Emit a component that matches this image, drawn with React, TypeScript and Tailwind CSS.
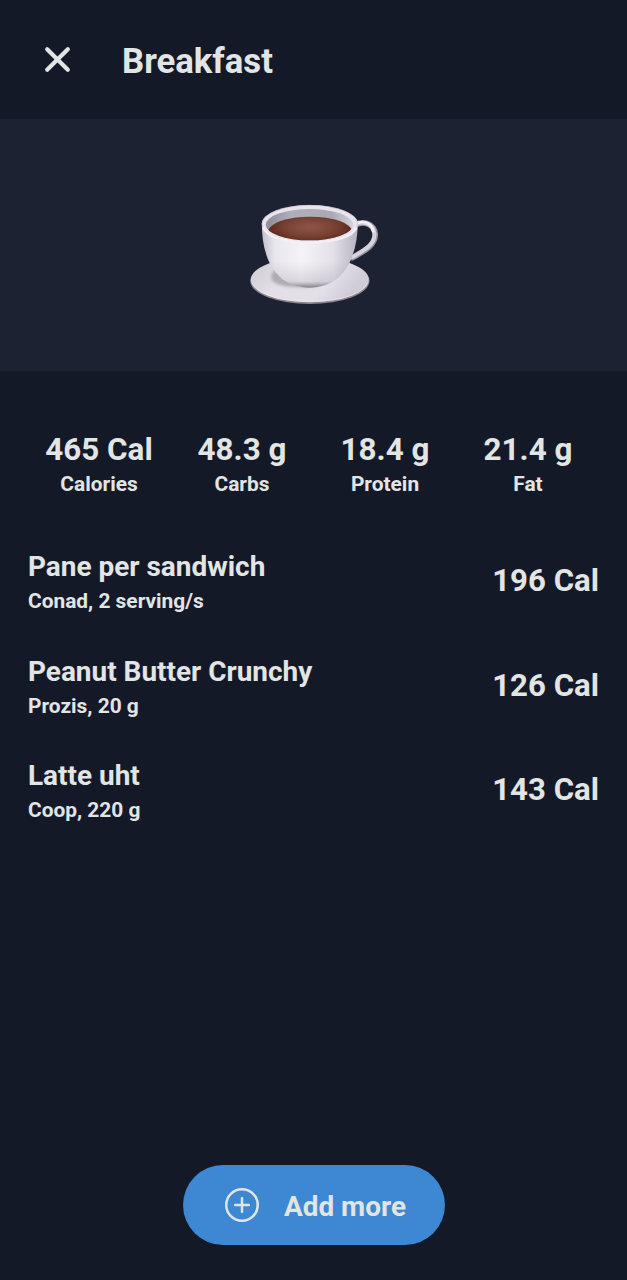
import React from "react"

type Nutrient = {
  label: string
  value: string
}

type Food = {
  name: string
  details: string
  calories: string
}

const nutrients: Nutrient[] = [
  { label: "Calories", value: "465 Cal" },
  { label: "Carbs", value: "48.3 g" },
  { label: "Protein", value: "18.4 g" },
  { label: "Fat", value: "21.4 g" },
]

const foods: Food[] = [
  { name: "Pane per sandwich", details: "Conad, 2 serving/s", calories: "196 Cal" },
  { name: "Peanut Butter Crunchy", details: "Prozis, 20 g", calories: "126 Cal" },
  { name: "Latte uht", details: "Coop, 220 g", calories: "143 Cal" },
]

const CoffeeCup: React.FC = () => (
  <svg viewBox="-2.5 -30 480 390" className="h-[130px] w-[160px]" role="img" aria-label="Cup of coffee">
    <defs>
      <linearGradient id="bowl" x1="0" y1="0" x2="1" y2="0">
        <stop offset="0" stopColor="#c3c0cc" />
        <stop offset="0.14" stopColor="#e9e7ee" />
        <stop offset="0.42" stopColor="#f5f3f7" />
        <stop offset="0.75" stopColor="#e2dfe8" />
        <stop offset="1" stopColor="#b5b1bf" />
      </linearGradient>
      <linearGradient id="bowlShade" x1="0" y1="0" x2="0" y2="1">
        <stop offset="0.6" stopColor="#8f8795" stopOpacity="0" />
        <stop offset="0.9" stopColor="#8f8795" stopOpacity="0.25" />
        <stop offset="1" stopColor="#6f6973" stopOpacity="0.85" />
      </linearGradient>
      <linearGradient id="inside" x1="0" y1="0" x2="1" y2="0">
        <stop offset="0" stopColor="#8d8b98" />
        <stop offset="0.3" stopColor="#b0b0bb" />
        <stop offset="0.75" stopColor="#a9a8b5" />
        <stop offset="1" stopColor="#d3d1da" />
      </linearGradient>
      <radialGradient id="coffee" cx="0.5" cy="0.35" r="0.55">
        <stop offset="0" stopColor="#8f5548" />
        <stop offset="0.55" stopColor="#784134" />
        <stop offset="1" stopColor="#592516" />
      </radialGradient>
      <linearGradient id="saucer" x1="0" y1="0" x2="1" y2="0.3">
        <stop offset="0" stopColor="#cbc8d1" />
        <stop offset="0.35" stopColor="#e2dfe6" />
        <stop offset="0.75" stopColor="#e4e0e8" />
        <stop offset="1" stopColor="#d0ccd6" />
      </linearGradient>
      <filter id="soft" x="-20%" y="-20%" width="140%" height="140%">
        <feGaussianBlur stdDeviation="4" />
      </filter>
      <clipPath id="rimClip">
        <ellipse cx="224" cy="104" rx="131" ry="47" />
      </clipPath>
    </defs>

    {/* saucer */}
    <ellipse cx="225" cy="273" rx="179" ry="69" fill="#8a8793" />
    <ellipse cx="225" cy="269" rx="177" ry="68" fill="url(#saucer)" />
    <path d="M53 279C65 311 130 334 225 334S385 311 397 279" fill="none" stroke="#f0edf3" strokeWidth="3" opacity="0.5" />
    <path
      d="M109 262C109 237 142 222 225 222C300 222 326 244 290 267C264 286 222 295 181 291C142 290 109 281 109 262Z"
      fill="#a09aa6"
      opacity="0.75"
      filter="url(#soft)"
    />

    {/* handle */}
    <path d="M363 104C385 92 418 100 421 132C423 166 386 184 353 203" fill="none" stroke="#9794a1" strokeWidth="17" strokeLinecap="round" />
    <path d="M363 103C385 92 416 100 419 132C421 164 386 182 353 201" fill="none" stroke="#d6d2dd" strokeWidth="12" strokeLinecap="round" />
    <path d="M370 98C393 91 412 103 415 124" fill="none" stroke="#f2eff5" strokeWidth="8" strokeLinecap="round" />

    {/* bowl */}
    <path d="M81 101C81 190 111 290 223 293C336 292 367 190 369 101Z" fill="url(#bowl)" />
    <path d="M81 101C81 190 111 290 223 293C336 292 367 190 369 101Z" fill="url(#bowlShade)" />
    <ellipse cx="225" cy="101" rx="144" ry="56" fill="#e7e4ec" />
    <ellipse cx="224" cy="104" rx="131" ry="47" fill="url(#inside)" />
    <ellipse cx="226" cy="125" rx="126" ry="45" fill="url(#coffee)" clipPath="url(#rimClip)" />
    <ellipse cx="225" cy="101" rx="143" ry="55" fill="none" stroke="#c9c6d1" strokeWidth="2" />
    <path d="M85 112C103 172 347 172 365 112" fill="none" stroke="#f2f0f5" strokeWidth="7" />
  </svg>
)

const App: React.FC = () => {
  return (
    <div className="flex h-[1280px] w-full flex-col bg-[#141927] font-['Roboto',sans-serif] font-bold text-[#e1e5e4]">
      <header className="flex h-[119px] shrink-0 items-center pl-[44px]">
        <button type="button" aria-label="Close" className="mr-[51px]">
          <svg viewBox="0 0 27 27" className="h-[27px] w-[27px]" fill="none" stroke="currentColor" strokeWidth="4.2" strokeLinecap="round">
            <path d="M3.2 3.2L23.8 23.8M23.8 3.2L3.2 23.8" />
          </svg>
        </button>
        <h1 className="pt-0.5 text-[34.7px] leading-10">Breakfast</h1>
      </header>

      <div className="flex h-[252px] shrink-0 items-center justify-center bg-[#1d2232]">
        <CoffeeCup />
      </div>

      <section className="mt-[58px] grid grid-cols-4 px-[27.5px] text-center">
        {nutrients.map((nutrient) => (
          <div key={nutrient.label}>
            <div className="text-[31.4px] leading-[41px]">{nutrient.value}</div>
            <div className="text-[20.9px] leading-[29px]">{nutrient.label}</div>
          </div>
        ))}
      </section>

      <ul className="mt-[47px] px-7">
        {foods.map((food) => (
          <li key={food.name} className="flex h-[104.5px] items-start justify-between">
            <div>
              <div className="text-[27.95px] leading-[41px]">{food.name}</div>
              <div className="text-[20.9px] leading-[29px]">{food.details}</div>
            </div>
            <div className="pt-[15px] text-[31.2px] leading-10">{food.calories}</div>
          </li>
        ))}
      </ul>

      <button
        type="button"
        className="mx-auto mt-auto mb-[35px] flex h-20 w-[262px] shrink-0 items-center rounded-full bg-[#3e87d2] pl-[42px]"
      >
        <svg viewBox="0 0 34 34" className="mr-[25.5px] h-[34px] w-[34px]" fill="none" stroke="currentColor" strokeWidth="2.5" strokeLinecap="round">
          <circle cx="17" cy="17" r="15.75" />
          <path d="M17 10.2V23.8M10.2 17H23.8" />
        </svg>
        <span className="pt-[3px] text-[27.9px] leading-10">Add more</span>
      </button>
    </div>
  )
}

export default App
